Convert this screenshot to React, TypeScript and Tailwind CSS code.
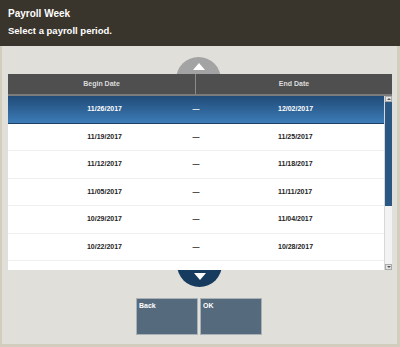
const rows = [
  { begin: '11/26/2017', end: '12/02/2017' },
  { begin: '11/19/2017', end: '11/25/2017' },
  { begin: '11/12/2017', end: '11/18/2017' },
  { begin: '11/05/2017', end: '11/11/2017' },
  { begin: '10/29/2017', end: '11/04/2017' },
  { begin: '10/22/2017', end: '10/28/2017' },
];

const App = () => {
  return (
    <div className="w-[400px] h-[347px] flex flex-col bg-[#e1dfda] font-['Liberation_Sans',Arial,sans-serif] overflow-hidden">
      {/* Title bar */}
      <div className="h-[46px] bg-[#3a352c] px-[8px] pt-[8px] text-white font-bold">
        <div className="text-[10px] leading-[12px]">Payroll Week</div>
        <div className="text-[9.5px] leading-[12px] mt-[5px]">Select a payroll period.</div>
      </div>

      <div className="relative flex-1 flex flex-col border-l-[2px] border-r-[3px] border-b-[3px] border-[#d3cdbd]">
        {/* Up arrow */}
        <div className="absolute left-[174px] top-[11px] w-[45px] h-[45px] rounded-full bg-[#a3a3a3] flex justify-center pt-[6px]">
          <div className="w-0 h-0 border-l-[6px] border-r-[6px] border-b-[7px] border-l-transparent border-r-transparent border-b-white"></div>
        </div>

        <div className="relative mt-[28px] ml-[6px] w-[384px]">
          {/* Down arrow */}
          <div className="absolute left-[169px] top-[168px] w-[45px] h-[45px] rounded-full bg-[#173b5f] flex flex-col justify-end items-center pb-[7px]">
            <div className="w-0 h-0 border-l-[6px] border-r-[6px] border-t-[7px] border-l-transparent border-r-transparent border-t-white"></div>
          </div>

          {/* Header */}
          <div className="relative h-[22px] bg-[#4f4f4f] border-b-[2px] border-[#7b7b7b] flex text-[7px] font-bold text-[#dcdcdc]">
            <div className="w-[188px] flex items-center justify-center border-r border-[#8a8a8a]">Begin Date</div>
            <div className="flex-1 flex items-center justify-center">End Date</div>
          </div>

          {/* Body */}
          <div className="relative h-[174px] flex bg-white">
            <div className="flex-1 overflow-hidden">
              {rows.map((r, i) => (
                <div
                  key={r.begin}
                  className={
                    i === 0
                      ? 'h-[27.5px] grid grid-cols-[176px_24px_1fr] items-center text-[7px] font-bold text-white bg-gradient-to-b from-[#214b78] to-[#3c7cb7] border-b border-[#1d3f63]'
                      : 'h-[27.5px] grid grid-cols-[176px_24px_1fr] items-center text-[7px] font-bold text-[#222] border-b border-[#efefef]'
                  }
                >
                  <div className="text-right pr-[62px]">{r.begin}</div>
                  <div className="text-center">—</div>
                  <div className="pl-[70px]">{r.end}</div>
                </div>
              ))}
            </div>
            {/* Scrollbar */}
            <div className="w-[8px] flex flex-col bg-[#f2f2f2] border-l border-[#d8d8d8]">
              <div className="h-[6px] bg-[#e4e4e4] border border-[#aaa] flex items-center justify-center">
                <div className="w-0 h-0 border-l-[2px] border-r-[2px] border-b-[2px] border-l-transparent border-r-transparent border-b-[#555]"></div>
              </div>
              <div className="h-[104px] bg-[#2b5784]"></div>
              <div className="flex-1"></div>
              <div className="h-[6px] bg-[#e4e4e4] border border-[#aaa] flex items-center justify-center">
                <div className="w-0 h-0 border-l-[2px] border-r-[2px] border-t-[2px] border-l-transparent border-r-transparent border-t-[#555]"></div>
              </div>
            </div>
          </div>
        </div>

        {/* Buttons */}
        <div className="mt-[28px] pl-[134px] flex gap-[2px]">
          <div className="w-[62px] h-[37px] bg-[#566a7e] border border-[#a9b0b6] text-white text-[7px] font-bold px-[2px] pt-[2px]">Back</div>
          <div className="w-[62px] h-[37px] bg-[#566a7e] border border-[#a9b0b6] text-white text-[7px] font-bold px-[2px] pt-[2px]">OK</div>
        </div>
      </div>
    </div>
  );
};

export default App;
